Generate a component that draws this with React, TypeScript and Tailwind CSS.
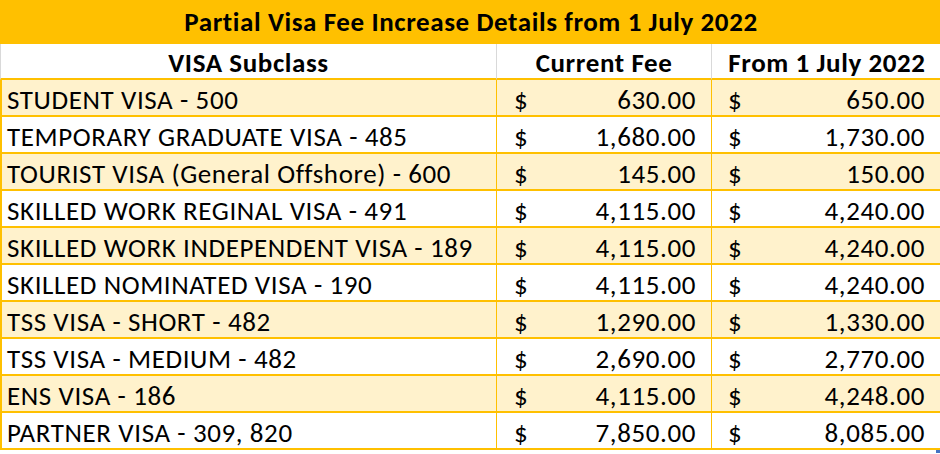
import React from 'react';

interface FeeRow {
  subclass: string;
  current: string;
  next: string;
}

const ROWS: FeeRow[] = [
  { subclass: 'STUDENT VISA - 500', current: '630.00', next: '650.00' },
  { subclass: 'TEMPORARY GRADUATE VISA - 485', current: '1,680.00', next: '1,730.00' },
  { subclass: 'TOURIST VISA (General Offshore) - 600', current: '145.00', next: '150.00' },
  { subclass: 'SKILLED WORK REGINAL VISA - 491', current: '4,115.00', next: '4,240.00' },
  { subclass: 'SKILLED WORK INDEPENDENT VISA - 189', current: '4,115.00', next: '4,240.00' },
  { subclass: 'SKILLED NOMINATED VISA - 190', current: '4,115.00', next: '4,240.00' },
  { subclass: 'TSS VISA - SHORT - 482', current: '1,290.00', next: '1,330.00' },
  { subclass: 'TSS VISA - MEDIUM - 482', current: '2,690.00', next: '2,770.00' },
  { subclass: 'ENS VISA - 186', current: '4,115.00', next: '4,248.00' },
  { subclass: 'PARTNER VISA - 309, 820', current: '7,850.00', next: '8,085.00' },
];

const FONT = "font-['Calibri','Carlito','Lato',sans-serif]";

const MoneyCell: React.FC<{ value: string; bg: string; last?: boolean }> = ({ value, bg, last }) => (
  <div
    className={`flex items-center justify-between h-[37px] pt-[4px] border-b-2 border-[#FFC000] ${
      last ? 'pl-[16px] pr-[17px]' : 'pl-[17px] pr-[15px] border-r border-r-[#FFC000]'
    } ${bg}`}
  >
    <span>$</span>
    <span>{value}</span>
  </div>
);

export default function App() {
  return (
    <div className={`relative w-[940px] h-[454px] overflow-hidden bg-white text-black tracking-[0.6px] ${FONT}`}>
      <div className="w-[942px]">
        <div className="h-[44px] bg-[#FFC000] flex items-center justify-center pt-[1px] text-[27px] font-bold">
          Partial Visa Fee Increase Details from 1 July 2022
        </div>

        <div className="grid grid-cols-[497px_215px_230px] text-[27px] leading-none">
          <div className="h-[36px] flex items-center justify-center pt-[3px] font-bold border-l border-l-[#d9d9d9] border-r border-r-[#d9d9d9] border-b-2 border-b-[#FFC000]">
            VISA Subclass
          </div>
          <div className="h-[36px] flex items-center justify-center pt-[3px] font-bold border-r border-r-[#d9d9d9] border-b-2 border-b-[#FFC000]">
            Current Fee
          </div>
          <div className="h-[36px] flex items-center justify-center pt-[3px] font-bold border-b-2 border-b-[#FFC000]">
            From 1 July 2022
          </div>

          {ROWS.map((row, i) => {
            const bg = i % 2 === 0 ? 'bg-[#FFF2CC]' : 'bg-white';
            return (
              <React.Fragment key={row.subclass}>
                <div
                  className={`h-[37px] flex items-center pl-[5px] pt-[4px] border-l-2 border-l-[#FFC000] border-r border-r-[#FFC000] border-b-2 border-b-[#FFC000] ${bg}`}
                >
                  {row.subclass}
                </div>
                <MoneyCell value={row.current} bg={bg} />
                <MoneyCell value={row.next} bg={bg} last />
              </React.Fragment>
            );
          })}
        </div>
      </div>
      {/* spreadsheet fill handle */}
      <div className="absolute left-[936px] top-[450px] w-[4px] h-[3px] bg-[#4472C4]" />
    </div>
  );
}
